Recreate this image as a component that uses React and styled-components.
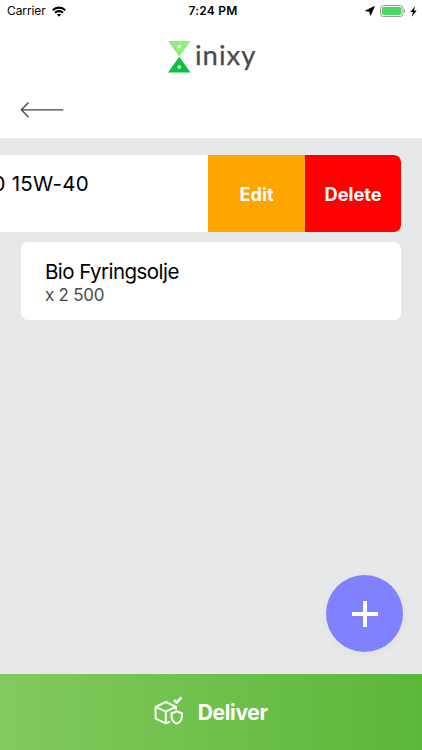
import React from "react";
import styled, { createGlobalStyle } from "styled-components";

const GlobalStyle = createGlobalStyle`
  * {
    box-sizing: border-box;
  }

  body {
    margin: 0;
    font-family: Inter, "Liberation Sans", sans-serif;
    color: #000;
    background: #fff;
  }

  button {
    border: 0;
    padding: 0;
    font-family: inherit;
    cursor: pointer;
  }

  svg {
    display: block;
    flex-shrink: 0;
  }
`;

const Screen = styled.div`
  position: relative;
  width: 422px;
  height: 750px;
  display: flex;
  flex-direction: column;
  overflow: hidden;
`;

const StatusBar = styled.div`
  height: 22px;
  padding: 0 5px 0 7px;
  display: grid;
  grid-template-columns: 1fr auto 1fr;
  align-items: center;
  font-size: 12px;
  line-height: 22px;
`;

const StatusGroup = styled.div`
  display: flex;
  align-items: center;
  justify-content: ${props => (props.$end ? "flex-end" : "flex-start")};
  gap: ${props => props.$gap}px;
  letter-spacing: -0.1px;
`;

const Time = styled.div`
  font-weight: 600;
  letter-spacing: 0.2px;
  padding-left: 2px;
`;

const Header = styled.header`
  height: 116px;
  display: flex;
  flex-direction: column;
`;

const Logo = styled.div`
  margin-top: 19px;
  height: 31px;
  padding-left: 168px;
  display: flex;
  align-items: center;
  gap: 4px;
`;

const LogoText = styled.span`
  font-family: Lato, sans-serif;
  font-size: 27.5px;
  line-height: 31px;
  letter-spacing: 1px;
  color: #4a4a4a;
  -webkit-text-stroke: 0.25px #4a4a4a;
  padding-bottom: 4px;
`;

const BackButton = styled.button`
  align-self: flex-start;
  margin: 29px 0 0 20px;
  background: none;
`;

const List = styled.main`
  flex: 1;
  padding: 16.8px 20.7px 0 20.5px;
  display: flex;
  flex-direction: column;
  gap: 10px;
  background: #e7e8ea;
`;

const Card = styled.div`
  height: 77.5px;
  padding: 16.5px 24.5px;
  border-radius: 7px;
  background: #fff;
`;

const SwipedCard = styled.div`
  height: 77.5px;
  margin-left: -20.5px;
  display: flex;
  border-radius: 0 7px 7px 0;
  overflow: hidden;
  background: #fff;
`;

const SwipedContent = styled.div`
  flex: 1;
  min-width: 0;
  display: flex;
  justify-content: flex-end;
  padding: 16px 119.5px 0 0;
`;

const Title = styled.div`
  font-size: 20.5px;
  line-height: 25px;
  letter-spacing: ${props => props.$spacing || "-0.55px"};
  white-space: nowrap;
`;

const Amount = styled.div`
  font-size: 17px;
  line-height: 22px;
  letter-spacing: -0.25px;
  color: #4c4c4c;
`;

const Action = styled.button`
  flex: 0 0 96.5px;
  color: #fff;
  font-size: 18.2px;
  font-weight: 700;
  background: ${props => props.$color};
`;

const AddButton = styled.button`
  position: absolute;
  right: 19px;
  bottom: 98px;
  width: 77px;
  height: 77px;
  display: flex;
  align-items: center;
  justify-content: center;
  border-radius: 50%;
  background: #7f81ff;
  box-shadow: 0 2px 8px rgba(0, 0, 0, 0.04);
`;

const DeliverButton = styled.button`
  height: 75.7px;
  display: flex;
  align-items: center;
  justify-content: center;
  gap: 14.5px;
  color: #fff;
  font-size: 21px;
  font-weight: 700;
  letter-spacing: -0.35px;
  background: linear-gradient(90deg, #82ca5d, #5cb739);

  svg {
    margin-bottom: 4px;
  }
`;

const WifiIcon = () => (
  <svg width="14" height="11" viewBox="0 0 15 11" fill="none" stroke="#000" strokeWidth="2.2">
    <path d="M0.8 4.1C4.5 0.4 10.5 0.4 14.2 4.1" />
    <path d="M3.2 6.8C5.6 4.5 9.4 4.5 11.8 6.8" />
    <path d="M7.5 11L5.2 8.8C6.5 7.6 8.5 7.6 9.8 8.8Z" fill="#000" stroke="none" />
  </svg>
);

const LocationIcon = () => (
  <svg width="10" height="10" viewBox="0 0 10 10">
    <path d="M9.3 0.5L5.5 9.3L4.7 5.4L0.6 4.8Z" fill="#000" stroke="#000" strokeWidth="0.8" strokeLinejoin="round" />
  </svg>
);

const BatteryIcon = () => (
  <svg width="26" height="12" viewBox="0 0 26 12">
    <rect x="0.5" y="0.5" width="22.5" height="11" rx="2.8" fill="none" stroke="#999" />
    <rect x="2" y="2" width="19.5" height="8" rx="1.4" fill="#4cd864" />
    <path d="M24 4C25.5 4.6 25.5 7.4 24 8Z" fill="#999" />
  </svg>
);

const BoltIcon = () => (
  <svg width="7" height="11" viewBox="0 0 7 11">
    <path d="M5 0.3L0.3 6.1H2.9L1.8 10.7L6.7 4.6H3.9Z" fill="#000" />
  </svg>
);

const LogoMark = () => (
  <svg width="23" height="32" viewBox="0 0 23 32">
    <path d="M0 0H22.5L11.25 15.8Z" fill="#8eee7c" />
    <path d="M0 31.5H22.5L11.25 15.8Z" fill="#0bc240" />
    <circle cx="11.3" cy="5.6" r="1.8" fill="#fff" />
    <circle cx="11.3" cy="26" r="1.8" fill="#fff" />
  </svg>
);

const ArrowIcon = () => (
  <svg width="44" height="18" viewBox="0 0 44 18" fill="none" stroke="#444" strokeWidth="1.3">
    <path d="M43.3 8.8H1.4M8.5 1.5L1.4 8.8L8.5 16.2" />
  </svg>
);

const PlusIcon = () => (
  <svg width="26" height="26" viewBox="0 0 26 26" stroke="#fff" strokeWidth="4">
    <path d="M13 0V26M0 13H26" />
  </svg>
);

// package with a shield in front and a check mark above
const DeliverIcon = () => (
  <svg width="29" height="29" viewBox="0 0 29 29" fill="none" stroke="#fff" strokeWidth="2" strokeLinejoin="round">
    <path d="M16 25.6L11.8 27.4L1.6 22.6V10.8L11.8 6L22 10.8V13.5" />
    <path d="M1.6 10.8L11.8 15.6L22 10.8M11.8 15.6V27.4" />
    <path d="M17.5 17.1C19.8 16.9 21.2 16.2 22.7 15.2C24.2 16.2 25.7 16.9 27.9 17.1V20.2C27.9 24 26 26.3 22.7 27.7C19.5 26.3 17.5 24 17.5 20.2Z" />
    <path d="M20 4L22.6 6.5L27.6 1.4" strokeWidth="2.6" />
  </svg>
);

const App = () => (
  <Screen>
    <GlobalStyle />
    <StatusBar>
      <StatusGroup $gap={6}>
        Carrier
        <WifiIcon />
      </StatusGroup>
      <Time>7:24 PM</Time>
      <StatusGroup $end $gap={4.5}>
        <LocationIcon />
        <BatteryIcon />
        <BoltIcon />
      </StatusGroup>
    </StatusBar>
    <Header>
      <Logo>
        <LogoMark />
        <LogoText>inixy</LogoText>
      </Logo>
      <BackButton aria-label="Back">
        <ArrowIcon />
      </BackButton>
    </Header>
    <List>
      <SwipedCard>
        <SwipedContent>
          <Title $spacing="0.25px">0 15W-40</Title>
        </SwipedContent>
        <Action $color="#ffa500">Edit</Action>
        <Action $color="#ff0000">Delete</Action>
      </SwipedCard>
      <Card>
        <Title>Bio Fyringsolje</Title>
        <Amount>x 2 500</Amount>
      </Card>
    </List>
    <DeliverButton>
      <DeliverIcon />
      Deliver
    </DeliverButton>
    <AddButton aria-label="Add">
      <PlusIcon />
    </AddButton>
  </Screen>
);

export default App;
